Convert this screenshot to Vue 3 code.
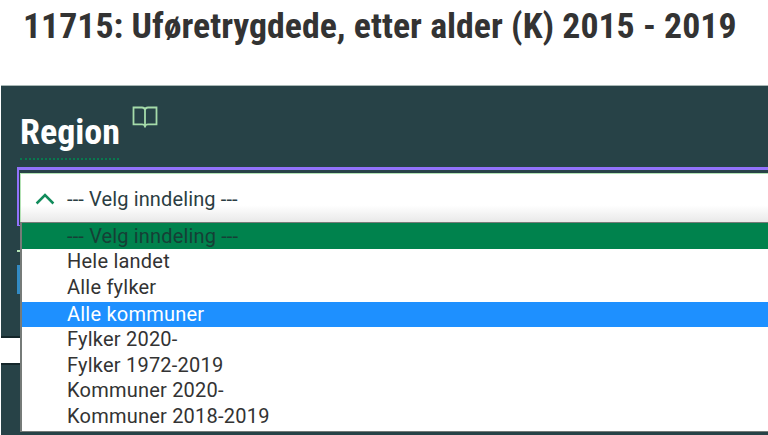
<script setup>
const options = [
  { label: '--- Velg inndeling ---', state: 'selected' },
  { label: 'Hele landet' },
  { label: 'Alle fylker', state: 'before-hovered' },
  { label: 'Alle kommuner', state: 'hovered' },
  { label: 'Fylker 2020-' },
  { label: 'Fylker 1972-2019' },
  { label: 'Kommuner 2020-' },
  { label: 'Kommuner 2018-2019' },
]
</script>

<template>
  <main class="page">
    <h1 class="title">
      <svg class="heading-svg" width="768" height="60" role="img">
        <text x="23" y="38" textLength="713.5" lengthAdjust="spacingAndGlyphs">11715: Uføretrygdede, etter alder (K) 2015 - 2019</text>
      </svg>
    </h1>
    <section class="panel">
      <header class="panel-head">
        <h2 class="region">
          <svg class="heading-svg" width="102" height="50">
            <text x="0" y="39.3" textLength="100" lengthAdjust="spacingAndGlyphs">Region</text>
          </svg>
        </h2>
        <svg class="book" width="26" height="24" viewBox="0 0 26 24">
          <path d="M13 4.8 Q12.6 2.5 10 2.5 H1.5 V19.3 H10 Q12.6 19.3 13 21.5 Q13.4 19.3 16 19.3 H24.5 V2.5 H16 Q13.4 2.5 13 4.8 V22.5" />
        </svg>
      </header>
      <div class="select-ring">
        <div class="select">
          <svg class="chevron" width="20" height="14" viewBox="0 0 20 14">
            <path d="M1.6 11.5 L10 3 L18.4 11.5" />
          </svg>
          <span>--- Velg inndeling ---</span>
        </div>
      </div>
      <div class="divider"></div>
      <div class="blue-button"></div>
      <ul class="options">
        <li v-for="o in options" :key="o.label" :class="o.state">{{ o.label }}</li>
      </ul>
    </section>
    <section class="panel next"></section>
  </main>
</template>

<style>
body {
  background: #fff;
  overflow: hidden;
}
</style>

<style scoped>
* {
  box-sizing: border-box;
}
.page {
  width: 768px;
  height: 435px;
  overflow: hidden;
  font-family: Roboto, "Liberation Sans", sans-serif;
}
.title,
.region {
  margin: 0;
  font-size: 35px;
}
.title {
  height: 85px;
}
.heading-svg {
  display: block;
  font-family: "Roboto Condensed", Roboto, sans-serif;
  font-stretch: condensed;
  font-size: 35px;
  font-weight: 700;
  fill: #333;
}
.region .heading-svg {
  fill: #fff;
}
.panel {
  position: relative;
  margin-left: 1px;
  height: 253px;
  background: #274247;
  border-top: 1px solid #a9b8b6;
  border-bottom: 2px solid #14262a;
}
.next {
  margin-top: 25px;
  height: 80px;
  border-top: 2px solid #14262a;
}
.panel-head {
  display: flex;
  height: 81px;
  padding: 19px 0 0 19px;
}
.region {
  flex: none;
  width: 99px;
  height: 55px;
  border-bottom: 2px dotted #08794f;
}
.book {
  margin-left: 12.5px;
  fill: none;
  stroke: #a5dbaa;
  stroke-width: 1.8;
}
.select-ring {
  margin-left: 16px;
  height: 59px;
  padding: 3px 0 0 1px;
  border: 2px solid #9272fc;
  border-width: 3px 0 1px 2px;
}
.select {
  display: flex;
  align-items: center;
  height: 50px;
  padding: 1px 0 0 14px;
  border: 1px solid #b3e2b5;
  border-right: 0;
  background: linear-gradient(#fff 65%, #e9e9e9);
  color: #2b3d42;
  font-size: 20px;
  letter-spacing: 0.13px;
}
.chevron {
  margin-right: 12px;
  fill: none;
  stroke: #118b5b;
  stroke-width: 2.5;
}
.divider {
  width: 4px;
  height: 2px;
  margin: 24px 0 0 16px;
  background: #b3e2b5;
}
.blue-button {
  width: 4px;
  height: 29px;
  margin: 13px 0 0 16px;
  background: #328bc4;
}
.options {
  position: absolute;
  z-index: 1;
  top: 136px;
  left: 19px;
  right: 0;
  height: 210px;
  margin: 0;
  padding: 0;
  list-style: none;
  background: #fff;
  border: 2px solid #767b78;
  border-width: 1px 0 1px 2px;
  color: #333;
  font-size: 20px;
  line-height: 24px;
  letter-spacing: 0.22px;
}
.options li {
  height: 25.6px;
  padding-left: 45px;
}
.options .selected {
  height: 26px;
  line-height: 26px;
  letter-spacing: 0.15px;
  color: #163f36;
  background: #00824d;
}
.options .before-hovered {
  height: 27px;
}
.options .hovered {
  color: #fff;
  background: #1e90ff;
}
</style>
